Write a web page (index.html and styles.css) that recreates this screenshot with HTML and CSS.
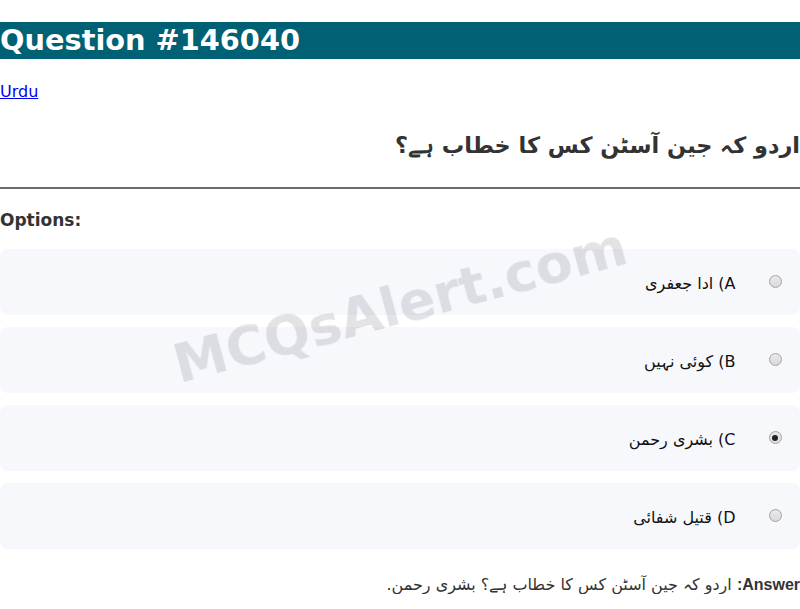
FILE: index.html
```html
<!DOCTYPE html>
<html lang="ur">
<head>
<meta charset="utf-8">
<title>Question #146040</title>
<link rel="stylesheet" href="styles.css">
</head>
<body>
<h1 class="page-title">Question #146040</h1>
<p class="category"><a href="#">Urdu</a></p>
<h2 class="question" dir="rtl">اردو کہ جین آسٹن کس کا خطاب ہے؟</h2>
<hr class="divider">
<h3 class="options-title">Options:</h3>
<div class="options">
  <label class="option" dir="rtl"><input class="radio" type="radio" name="q"><span class="option-text">A) ادا جعفری</span></label>
  <label class="option" dir="rtl"><input class="radio" type="radio" name="q"><span class="option-text">B) کوئی نہیں</span></label>
  <label class="option" dir="rtl"><input class="radio" type="radio" name="q" checked><span class="option-text">C) بشری رحمن</span></label>
  <label class="option" dir="rtl"><input class="radio" type="radio" name="q"><span class="option-text">D) قتیل شفائی</span></label>
</div>
<p class="answer" dir="rtl"><strong>Answer:</strong> اردو کہ جین آسٹن کس کا خطاب ہے؟ بشری رحمن.</p>
<div class="watermark">MCQsAlert.com</div>
</body>
</html>
```
FILE: styles.css
```css
html, body {
  margin: 0;
  padding: 0;
  background: #ffffff;
}
body {
  font-family: "DejaVu Sans", sans-serif;
  font-size: 16px;
  color: #333333;
}
.page-title {
  margin: 22px 0 0 0;
  height: 37px;
  line-height: 37px;
  font-size: 28.8px;
  font-weight: bold;
  color: #ffffff;
  background: #006074;
  white-space: nowrap;
}
.category {
  margin: 23px 0 0 0;
  line-height: 19px;
}
.category a {
  color: #0000ee;
}
.question {
  margin: 31px 0 0 0;
  font-size: 22.4px;
  font-weight: bold;
  line-height: 26px;
  text-align: right;
  color: #333333;
}
.divider {
  margin: 29px 0 0 0;
  border: 0;
  border-top: 2px solid #6b6b6b;
  height: 0;
}
.options-title {
  margin: 21px 0 0 0;
  font-size: 17px;
  font-weight: bold;
  line-height: 20px;
  color: #333333;
}
.options {
  margin-top: 19px;
  display: flex;
  flex-direction: column;
  gap: 12px;
}
.option {
  display: flex;
  align-items: center;
  height: 66px;
  padding: 0 18.5px;
  background: #f7f8fc;
  border-radius: 8px;
  color: #111111;
  box-sizing: border-box;
}
.radio {
  -webkit-appearance: none;
  appearance: none;
  margin: 0 0 1px 0;
  width: 13px;
  height: 13px;
  border-radius: 50%;
  border: 1px solid #a3a3a3;
  background: linear-gradient(#e9e9e9, #d9d9d9);
  box-sizing: border-box;
  position: relative;
  flex: none;
}
.radio:checked {
  background: #e3e3e3;
}
.radio:checked::after {
  content: "";
  position: absolute;
  left: 2.5px;
  top: 2.5px;
  width: 6px;
  height: 6px;
  border-radius: 50%;
  background: #222222;
}
.option-text {
  margin-right: 33px;
  padding-top: 2px;
  line-height: 19px;
}
.answer {
  margin: 26px 0 0 0;
  line-height: 19px;
  color: #333333;
}
.answer strong {
  font-family: "Liberation Sans", Arial, sans-serif;
  color: #333333;
}
.watermark {
  position: fixed;
  left: 50%;
  top: 50%;
  transform: translate(-50%, -50%) rotate(-15deg);
  font-size: 54px;
  font-weight: bold;
  color: rgba(40, 40, 60, 0.13);
  white-space: nowrap;
  pointer-events: none;
}
```
